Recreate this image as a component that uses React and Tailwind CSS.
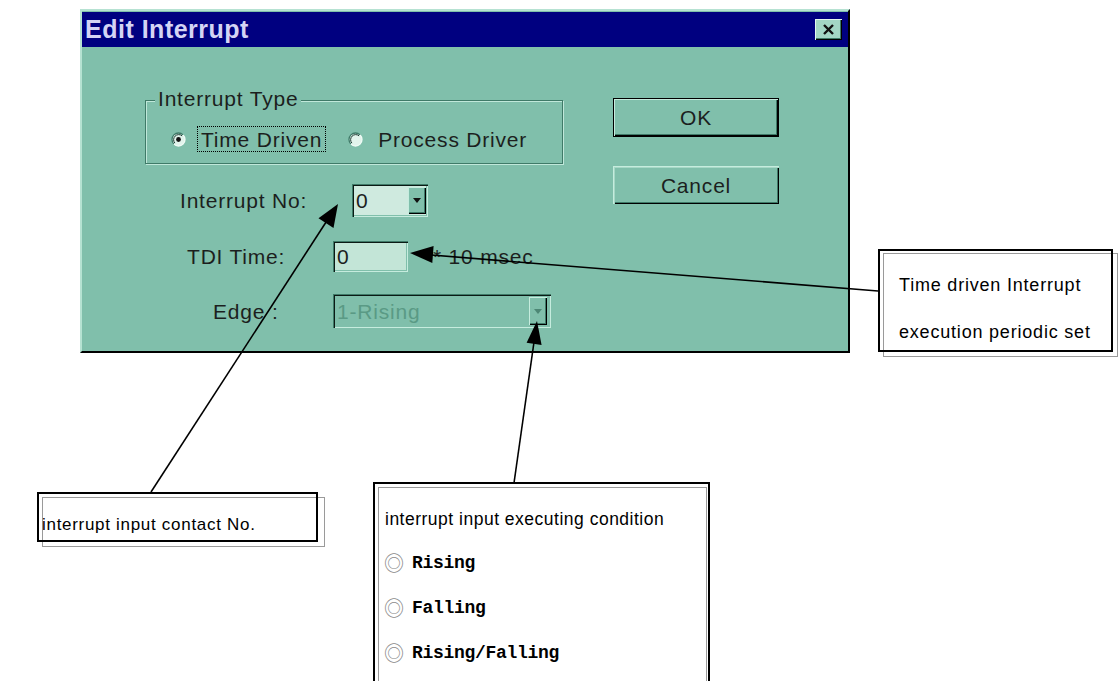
import React from "react";

function Radio({ checked }) {
  return (
    <svg width="15" height="15" viewBox="0 0 15 15" className="shrink-0">
      <circle cx="7.5" cy="7.5" r="6.5" fill="#e2f4ec" />
      <path d="M2.9 12.1 A6.5 6.5 0 0 1 12.1 2.9" fill="none" stroke="#3f7a68" strokeWidth="1.3" />
      <path d="M3.9 11.1 A5.1 5.1 0 0 1 11.1 3.9" fill="none" stroke="#1d3a31" strokeWidth="1" />
      <path d="M12.1 2.9 A6.5 6.5 0 0 1 2.9 12.1" fill="none" stroke="#f0fbf6" strokeWidth="1.3" />
      {checked && <circle cx="7.5" cy="7.5" r="2.4" fill="#111" />}
    </svg>
  );
}

function DropBtn({ disabled }) {
  return (
    <div className="w-[18px] h-full flex items-center justify-center bg-[#80bfab] shadow-[inset_1px_1px_0_#c6ecde,inset_-1px_-1px_0_#000,inset_-2px_-2px_0_#3f7a68]">
      <svg width="8" height="5" viewBox="0 0 8 5">
        <polygon points="0,0 8,0 4,5" fill={disabled ? "#4d8775" : "#111"} />
      </svg>
    </div>
  );
}

const sunken =
  "shadow-[inset_1px_1px_0_#3f7a68,inset_2px_2px_0_#0b1a15,inset_-1px_-1px_0_#c6ecde,inset_-2px_-2px_0_#80bfab]";

export default function App() {
  return (
    <div className="relative w-[1118px] h-[681px] bg-white overflow-hidden font-['Liberation_Sans',Arial,sans-serif]">
      <div className="pl-[80px] pt-[9px]">
        {/* Dialog */}
        <div className="w-[770px] h-[344px] bg-[#80bfab] border-2 border-t-[#b6e2d2] border-l-[#b6e2d2] border-b-black border-r-black flex flex-col text-[#1c1f1e]">
          {/* Title bar */}
          <div className="mt-[1px] h-[35px] bg-[#000080] flex items-center justify-between pl-[3px] pr-[6px]">
            <span className="text-[25px] font-bold tracking-[0.5px] text-[#d4d4f4] leading-none">
              Edit Interrupt
            </span>
            <div className="w-[27px] h-[21px] bg-[#a3d6c5] flex items-center justify-center shadow-[inset_1px_1px_0_#e2f6ee,inset_-1px_-1px_0_#000,inset_-2px_-2px_0_#3f7a68]">
              <svg width="13" height="11" viewBox="0 0 13 11">
                <path d="M2 1 L11 10 M11 1 L2 10" stroke="#111" strokeWidth="2.4" />
              </svg>
            </div>
          </div>

          {/* Body */}
          <div className="flex-1 flex text-[21px] tracking-[0.8px] leading-none">
            {/* Left column */}
            <div className="w-[531px] flex flex-col">
              {/* Group box */}
              <div className="relative ml-[63px] mt-[53px] w-[418px] h-[64px] border border-[#3f7a68] shadow-[1px_1px_0_#c0e8da,inset_1px_1px_0_#c0e8da]">
                <span className="absolute left-[9px] -top-[14px] px-[3px] bg-[#80bfab] leading-[24px]">
                  Interrupt Type
                </span>
                <div className="mt-[25px] h-[26px] flex items-center pl-[25px]">
                  <Radio checked />
                  <span className="ml-[11px] h-[26px] px-[3px] flex items-center border border-dotted border-black">
                    Time Driven
                  </span>
                  <span className="ml-[22px] flex">
                    <Radio />
                  </span>
                  <span className="ml-[15px]">Process Driver</span>
                </div>
              </div>

              {/* Interrupt No */}
              <div className="mt-[20px] h-[33px] flex items-center pl-[98px]">
                <span className="w-[172px]">Interrupt No:</span>
                <div className={`w-[76px] h-[33px] flex items-stretch p-[3px] pr-[2px] bg-[#cfeadf] ${sunken}`}>
                  <span className="flex-1 flex items-center pl-[1px]">0</span>
                  <DropBtn />
                </div>
              </div>

              {/* TDI Time */}
              <div className="mt-[24px] h-[31px] flex items-center pl-[105px]">
                <span className="w-[146px]">TDI Time:</span>
                <div className={`w-[75px] h-[31px] flex items-center pl-[4px] bg-[#c3e5d7] ${sunken}`}>0</div>
                <span className="ml-[25px]">* 10 msec</span>
              </div>

              {/* Edge */}
              <div className="mt-[22px] h-[34px] flex items-center pl-[131px]">
                <span className="w-[120px]">Edge :</span>
                <div className={`w-[218px] h-[34px] flex items-stretch p-[3px] pr-[4px] bg-[#80bfab] ${sunken}`}>
                  <span className="flex-1 flex items-center pl-[1px] text-[#5a9a85]">1-Rising</span>
                  <DropBtn disabled />
                </div>
              </div>
            </div>

            {/* Right column */}
            <div className="flex flex-col pt-[51px]">
              <div className="w-[166px] h-[39px] border border-black">
                <div className="w-full h-full flex items-center justify-center shadow-[inset_1px_1px_0_#c6ecde,inset_-1px_-1px_0_#000,inset_-2px_-2px_0_#3f7a68]">
                  OK
                </div>
              </div>
              <div className="mt-[29px] w-[166px] h-[38px] flex items-center justify-center shadow-[inset_1px_1px_0_#c6ecde,inset_2px_2px_0_#a6d8c6,inset_-1px_-1px_0_#000,inset_-2px_-2px_0_#3f7a68]">
                Cancel
              </div>
            </div>
          </div>
        </div>
      </div>

      {/* Callout: right */}
      <div className="absolute left-[883px] top-[253px] w-[235px] h-[104px] border border-[#9a9a9a]" />
      <div className="absolute left-[878px] top-[249px] w-[235px] h-[103px] border-2 border-black flex flex-col text-[18px] tracking-[0.8px] text-black leading-none">
        <span className="ml-[19px] mt-[25px]">Time driven Interrupt</span>
        <span className="ml-[19px] mt-[29px]">execution periodic set</span>
      </div>

      {/* Callout: left */}
      <div className="absolute left-[42px] top-[497px] w-[283px] h-[50px] border border-[#9a9a9a]" />
      <div className="absolute left-[37px] top-[492px] w-[281px] h-[50px] border-2 border-black flex items-center pt-[14px] text-[17px] tracking-[0.7px] text-black leading-none">
        <span className="ml-[3px]">interrupt input contact No.</span>
      </div>

      {/* Callout: bottom */}
      <div className="absolute left-[378px] top-[487px] w-[329px] h-[210px] border border-[#9a9a9a]" />
      <div className="absolute left-[373px] top-[482px] w-[337px] h-[220px] border-2 border-black flex flex-col text-black leading-none">
        <span className="ml-[10px] mt-[27px] text-[17.5px] tracking-[0.5px]">interrupt input executing condition</span>
        {["Rising", "Falling", "Rising/Falling"].map((t, i) => (
          <div key={t} className={`ml-[9px] flex items-center ${i === 0 ? "mt-[24px]" : "mt-[25px]"}`}>
            <span className="text-[20px] text-[#8a8a8a] font-['Noto_Sans_CJK_KR',sans-serif] leading-none">◎</span>
            <span className="ml-[8px] text-[18px] font-bold font-['Liberation_Mono',monospace] tracking-[-0.3px]">{t}</span>
          </div>
        ))}
      </div>

      {/* Arrows */}
      <svg className="absolute inset-0 pointer-events-none" width="1118" height="681" viewBox="0 0 1118 681">
        <line x1="151" y1="492" x2="330" y2="216" stroke="#000" strokeWidth="1.6" />
        <polygon points="338,204 333.5,228 318.5,218.3" fill="#000" />
        <line x1="514" y1="483" x2="535" y2="335" stroke="#000" strokeWidth="1.6" />
        <polygon points="537,321 541.6,345 526.6,342.8" fill="#000" />
        <line x1="878" y1="291" x2="425" y2="254.5" stroke="#000" strokeWidth="1.6" />
        <polygon points="410,253 433.6,246 432.3,263" fill="#000" />
      </svg>
    </div>
  );
}
